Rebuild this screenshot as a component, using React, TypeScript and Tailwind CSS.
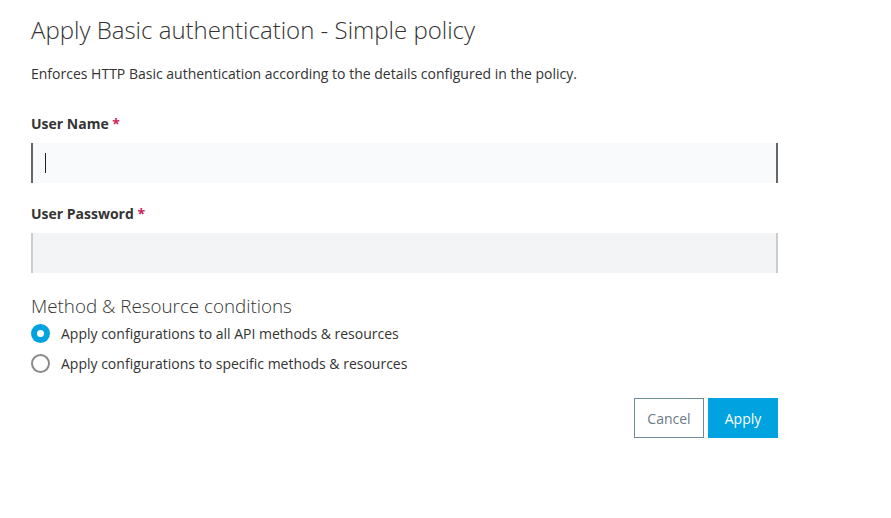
export default function App() {
  return (
    <div className="min-h-screen w-full bg-white font-['Open_Sans',sans-serif] text-[#333]">
      <div className="w-[747px] ml-[31px] pt-[14px]">
        <h1 className="text-[24px] leading-[32px] font-light text-[#333]">
          Apply Basic authentication - Simple policy
        </h1>
        <p className="mt-[18px] text-[14px] leading-[19px] text-[#333]">
          Enforces HTTP Basic authentication according to the details configured in the policy.
        </p>

        <label className="block mt-[31px] text-[14px] leading-[19px] font-bold text-[#333]">
          User Name <span className="text-[#d0215b]">*</span>
        </label>
        <div className="mt-[10px] h-[40px] bg-[#f9fafb] border-x-2 border-[#666] flex items-center pl-[12px]">
          <span className="w-px h-[20px] bg-[#222]" />
        </div>

        <label className="block mt-[21px] text-[14px] leading-[19px] font-bold text-[#333]">
          User Password <span className="text-[#d0215b]">*</span>
        </label>
        <div className="mt-[10px] h-[40px] bg-[#f3f4f6] border-x-2 border-[#ccc]" />

        <h2 className="mt-[20px] text-[18.8px] leading-[26px] font-light text-[#333]">
          Method &amp; Resource conditions
        </h2>
        <div className="mt-[5px] flex flex-col gap-[11px]">
          <div className="flex items-center gap-[11px]">
            <span className="w-[19px] h-[19px] rounded-full bg-[#00a3e0] flex items-center justify-center">
              <span className="w-[7px] h-[7px] rounded-full bg-white" />
            </span>
            <span className="text-[14px] leading-[19px] text-[#333]">
              Apply configurations to all API methods &amp; resources
            </span>
          </div>
          <div className="flex items-center gap-[11px]">
            <span className="w-[19px] h-[19px] rounded-full border-2 border-[#8a8a8a] bg-white" />
            <span className="text-[14px] leading-[19px] text-[#333]">
              Apply configurations to specific methods &amp; resources
            </span>
          </div>
        </div>

        <div className="mt-[25px] flex justify-end gap-[4px]">
          <button className="w-[70px] h-[40px] border border-[#6d8c9a] bg-white text-[14px] text-[#6b7a85]">
            Cancel
          </button>
          <button className="w-[70px] h-[40px] bg-[#00a3e0] text-[14px] text-white">
            Apply
          </button>
        </div>
      </div>
    </div>
  );
}
